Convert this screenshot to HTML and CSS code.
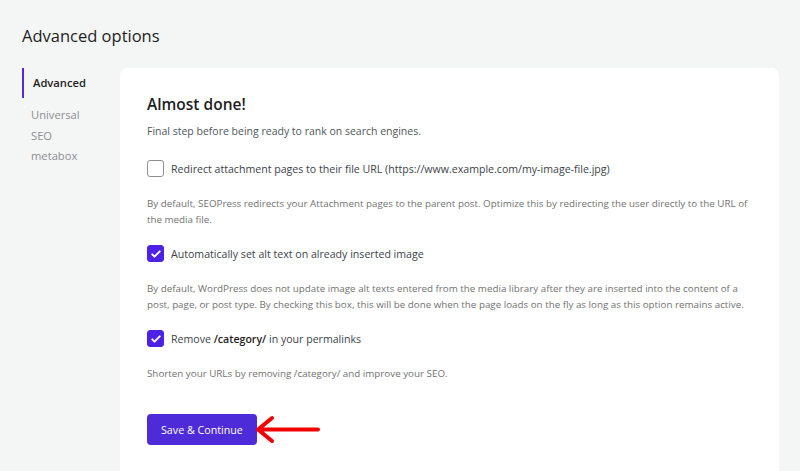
FILE: index.html
```html
<!DOCTYPE html>
<html lang="en">

<head>
  <meta charset="UTF-8" />
  <meta name="viewport" content="width=device-width, initial-scale=1" />
  <title>Advanced options</title>
  <link rel="stylesheet" href="styles.css">
</head>

<body>

  <h1 class="page-title">Advanced options</h1>

  <div class="layout">
    <nav class="side-nav">
      <a class="nav-item active">Advanced</a>
      <a class="nav-item">Universal SEO metabox</a>
    </nav>

    <main class="card">
      <h2 class="card-title">Almost done!</h2>
      <p class="card-sub">Final step before being ready to rank on search engines.</p>

      <div class="option">
        <label class="check-row">
          <span class="box"></span>
          <span>Redirect attachment pages to their file URL (https://www.example.com/my-image-file.jpg)</span>
        </label>
        <p class="desc">By default, SEOPress redirects your Attachment pages to the parent post. Optimize this by redirecting the user directly to the URL of the media file.</p>
      </div>

      <div class="option">
        <label class="check-row">
          <span class="box checked">
            <svg viewBox="0 0 16 16" width="12" height="12"><path d="M3 8.5l3 3 7-7" fill="none" stroke="#fff" stroke-width="2.6" stroke-linecap="round" stroke-linejoin="round"/></svg>
          </span>
          <span>Automatically set alt text on already inserted image</span>
        </label>
        <p class="desc">By default, WordPress does not update image alt texts entered from the media library after they are inserted into the content of a post, page, or post type. By checking this box, this will be done when the page loads on the fly as long as this option remains active.</p>
      </div>

      <div class="option">
        <label class="check-row">
          <span class="box checked">
            <svg viewBox="0 0 16 16" width="12" height="12"><path d="M3 8.5l3 3 7-7" fill="none" stroke="#fff" stroke-width="2.6" stroke-linecap="round" stroke-linejoin="round"/></svg>
          </span>
          <span>Remove <strong>/category/</strong> in your permalinks</span>
        </label>
        <p class="desc">Shorten your URLs by removing /category/ and improve your SEO.</p>
      </div>

      <div class="actions">
        <button class="btn">Save &amp; Continue</button>
        <svg class="arrow" viewBox="0 0 66 30" width="66" height="30">
          <path d="M3 14.5H63M3 14.5L17 3M3 14.5L17 26" fill="none" stroke="#f20000" stroke-width="4" stroke-linecap="round" stroke-linejoin="round"/>
        </svg>
      </div>
    </main>
  </div>

</body>
</html>
```

FILE: styles.css
```css
body {
  font-family: "Open Sans", "Noto Sans", sans-serif;
  background: #f4f5f5;
  margin: 0;
  padding: 0 21px 0 22px;
  color: #1e1e1e;
  overflow: hidden;
  height: 471px;
}

.page-title {
  font-size: 16.5px;
  font-weight: 400;
  margin: 0;
  padding-top: 24px;
  height: 44px;
  line-height: 24px;
}

.layout {
  display: flex;
}

.side-nav {
  width: 98px;
  display: flex;
  flex-direction: column;
}

.nav-item {
  display: block;
  font-size: 11.2px;
  color: #8c8f94;
  padding: 0 40px 0 7px;
  line-height: 20.5px;
  border-left: 2px solid transparent;
}

.nav-item.active {
  color: #1e1e1e;
  font-weight: 600;
  border-left-color: #5727d8;
  padding: 5px 0 5px 9px;
  line-height: 20px;
  margin-bottom: 7px;
}

.card {
  flex: 1;
  background: #ffffff;
  border-radius: 8px 8px 0 0;
  padding: 25px 27px 0;
  min-height: 403px;
  box-sizing: border-box;
}

.card-title {
  font-size: 15.5px;
  font-weight: 600;
  margin: 0;
  line-height: 22px;
}

.card-sub {
  font-size: 10.5px;
  color: #50575e;
  margin: 8px 0 21px;
  line-height: 16px;
}

.option {
  margin-bottom: 17px;
}

.check-row {
  display: flex;
  align-items: center;
  font-size: 10.6px;
  color: #3c434a;
  height: 17px;
}

.box {
  width: 17px;
  height: 17px;
  box-sizing: border-box;
  border: 1px solid #8c8f94;
  border-radius: 3px;
  margin-right: 7px;
  display: flex;
  align-items: center;
  justify-content: center;
  flex-shrink: 0;
}

.box.checked {
  background: #4e21e7;
  border-color: #4e21e7;
}

.check-row strong {
  font-weight: 600;
  color: #1e1e1e;
}

.desc {
  font-size: 9.8px;
  color: #727272;
  line-height: 16px;
  margin: 19px 0 0;
}

.actions {
  display: flex;
  align-items: center;
  margin-top: 32px;
}

.btn {
  font-family: inherit;
  font-size: 10.7px;
  color: #ffffff;
  background: #4e2bd8;
  border: none;
  border-radius: 4px;
  padding: 0 14px;
  height: 31px;
  cursor: pointer;
}

.arrow {
  margin-left: -2px;
}
```
